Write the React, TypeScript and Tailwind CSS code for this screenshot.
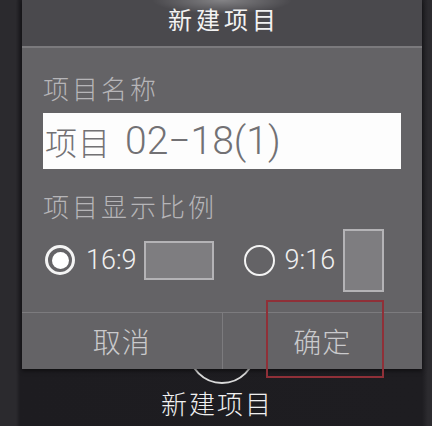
import React from "react";

const cjk = { fontFamily: '"Noto Sans CJK SC", "Noto Sans", sans-serif' };
const num = { fontFamily: 'Roboto, "Noto Sans CJK SC", sans-serif' };

export default function App() {
  return (
    <div
      className="relative w-[432px] h-[426px] overflow-hidden bg-[linear-gradient(to_right,#2b2a2e_0px,#2b2a2e_16px,#1d1c20_20px,#1e1d21_422px,#2c2b2f_428px)]"
      style={cjk}
    >
      {/* circle behind dialog */}
      <div className="absolute left-[188px] top-[316px] w-[68px] h-[68px] rounded-full border-2 border-[#d9d9d9]" />

      {/* dialog */}
      <div className="relative z-10 ml-[22px] w-[400px] flex flex-col shadow-[0_2px_4px_rgba(0,0,0,0.5)]">
        <div className="h-[46px] bg-[#4a494d] bg-[radial-gradient(ellipse_70px_14px_at_50%_0%,rgba(255,255,255,0.32),rgba(255,255,255,0))]">
          <div className="text-center text-[24px] leading-[38px] tracking-[4px] text-[#f2f2f2] pl-[4px]">
            新建项目
          </div>
        </div>
        <div className="h-[2px] bg-[#7b7a7d]" />
        <div className="bg-[#646366] flex flex-col">
          <div className="flex flex-col px-[21px] pt-[22px] pb-[20px]">
            <div className="text-[26px] leading-[36px] tracking-[3px] font-light text-[#b6b5b8]">
              项目名称
            </div>
            <div className="mt-[7px] h-[56px] bg-[#fdfdfd] flex items-center pl-[2px] text-[#727174]">
              <span className="text-[32px] leading-[40px] tracking-[1px] font-light">项目</span>
              <span className="ml-[14px] text-[39px] leading-[40px] font-light" style={num}>
                02−18(1)
              </span>
            </div>
            <div className="mt-[19px] text-[26px] leading-[36px] tracking-[3px] font-light text-[#b6b5b8]">
              项目显示比例
            </div>
            <div className="mt-[4px] h-[64px] flex items-center">
              <div className="ml-[2px] w-[30px] h-[30px] rounded-full border-[3px] border-[#f4f4f4] flex items-center justify-center">
                <div className="w-[17px] h-[17px] rounded-full bg-white" />
              </div>
              <span className="ml-[11px] text-[27px] font-light text-[#f0f0f0]" style={num}>
                16:9
              </span>
              <div className="ml-[7px] w-[70px] h-[39px] bg-[#7e7d80] border-2 border-[#b4b3b6]" />
              <div className="ml-[30px] w-[31px] h-[31px] rounded-full border-2 border-[#f4f4f4]" />
              <span className="ml-[10px] text-[27px] font-light text-[#f0f0f0]" style={num}>
                9:16
              </span>
              <div className="ml-[8px] w-[41px] h-[63px] bg-[#7e7d80] border-2 border-[#b4b3b6]" />
            </div>
          </div>
          <div className="border-t border-[#7c7b7e] flex h-[57px]">
            <div className="flex-1 flex items-center justify-center text-[28px] tracking-[1px] font-light text-[#cacacc]">
              取消
            </div>
            <div className="flex-1 flex items-center justify-center border-l border-[#7c7b7e] text-[28px] tracking-[1px] font-light text-[#cacacc]">
              确定
            </div>
          </div>
        </div>
      </div>

      {/* bottom label */}
      <div className="h-[57px] flex items-start justify-center pt-[16px]">
        <div className="text-[26px] leading-[36px] tracking-[2px] font-light text-[#f0f0f0] pl-[2px]">
          新建项目
        </div>
      </div>

      {/* red annotation */}
      <div className="absolute z-20 left-[266px] top-[300px] w-[118px] h-[78px] border-2 border-[#8f3038]" />
    </div>
  );
}
